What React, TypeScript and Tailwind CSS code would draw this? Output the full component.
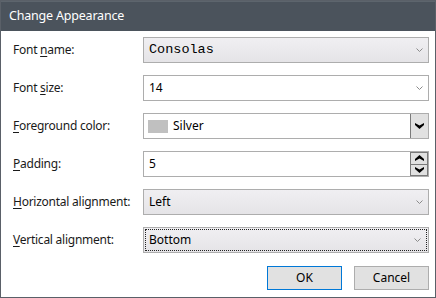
import React from 'react'

const font = { fontFamily: '"Noto Sans", "Open Sans", sans-serif' }

function Chevron() {
    return (
        <svg width="7" height="4" viewBox="0 0 7 4" className="mr-[5px]">
            <polyline points="0.5,0.5 3.5,3.5 6.5,0.5" fill="none" stroke="#8a8a8a" strokeWidth="1" />
        </svg>
    )
}

function BoldArrow({ up = false }: { up?: boolean }) {
    return (
        <svg width="9" height="6" viewBox="0 0 9 6" style={{ transform: up ? 'rotate(180deg)' : undefined }}>
            <path d="M0 0 L4.5 2.5 L9 0 L9 2 L4.5 6 L0 2 Z" fill="#000" />
        </svg>
    )
}

function Label({ text, i }: { text: string; i: number }) {
    // underline the access key character
    return (
        <div className="w-[131px] pl-[1px] text-[12px] tracking-[-0.25px] text-[#1a1a1a]">
            {text.slice(0, i)}
            <span className="underline underline-offset-2">{text[i]}</span>
            {text.slice(i + 1)}
        </div>
    )
}

function Row({ label, k, children }: { label: string; k: number; children: React.ReactNode }) {
    return (
        <div className="flex items-center h-[26px]">
            <Label text={label} i={k} />
            {children}
        </div>
    )
}

export default function App() {
    return (
        <div
            className="w-[436px] h-[298px] bg-white border border-[#5a6068] flex flex-col"
            style={font}
        >
            {/* Title bar */}
            <div className="h-[30px] bg-[#4b535c] border-t border-[#5d656d] flex items-center pl-[8px] text-[12.5px] tracking-[-0.2px] text-white">
                Change Appearance
            </div>

            <div className="flex flex-col gap-[12px] pt-[6px] pl-[11px] pr-[6px]">
                <Row label="Font name:" k={5}>
                    <div className="w-[286px] h-[26px] border border-[#adadad] bg-gradient-to-b from-[#f0eff2] to-[#e5e4e7] flex items-center justify-between pl-[5px]">
                        <span className="text-[13.5px] text-black" style={{ fontFamily: '"Liberation Mono", monospace' }}>
                            Consolas
                        </span>
                        <Chevron />
                    </div>
                </Row>

                <Row label="Font size:" k={5}>
                    <div className="w-[286px] h-[26px] border border-[#adadad] bg-white flex items-center justify-between pl-[5px] text-[12px]">
                        <span>14</span>
                        <Chevron />
                    </div>
                </Row>

                <Row label="Foreground color:" k={0}>
                    <div className="w-[286px] h-[26px] border border-[#adadad] bg-white flex items-center text-[12px]">
                        <div className="w-[20px] h-[13px] bg-[#c0c0c0] ml-[4px]" />
                        <span className="ml-[5px]">Silver</span>
                        <div className="ml-auto w-[18px] h-[24px] bg-[#e1e1e1] border-l border-[#7a7a7a] flex items-center justify-center">
                            <BoldArrow />
                        </div>
                    </div>
                </Row>

                <Row label="Padding:" k={0}>
                    <div className="w-[286px] h-[26px] border border-[#adadad] bg-white flex items-center text-[12px]">
                        <span className="pl-[5px]">5</span>
                        <div className="ml-auto w-[18px] h-[24px] flex flex-col">
                            <div className="flex-1 bg-[#e1e1e1] border border-[#7a7a7a] flex items-center justify-center">
                                <BoldArrow up />
                            </div>
                            <div className="flex-1 bg-[#e1e1e1] border border-t-0 border-[#7a7a7a] flex items-center justify-center">
                                <BoldArrow />
                            </div>
                        </div>
                    </div>
                </Row>

                <Row label="Horizontal alignment:" k={0}>
                    <div className="w-[286px] h-[26px] border border-[#adadad] bg-gradient-to-b from-[#f0eff2] to-[#e5e4e7] flex items-center justify-between pl-[5px] text-[12px]">
                        <span>Left</span>
                        <Chevron />
                    </div>
                </Row>

                <Row label="Vertical alignment:" k={0}>
                    <div className="w-[286px] h-[26px] border border-[#adadad] bg-gradient-to-b from-[#f0eff2] to-[#e5e4e7] p-[1px]">
                        <div className="h-full border border-dotted border-[#222] flex items-center justify-between pl-[3px] text-[12px]">
                            <span>Bottom</span>
                            <Chevron />
                        </div>
                    </div>
                </Row>
            </div>

            {/* Buttons */}
            <div className="flex justify-end gap-[12px] pr-[6px] mt-[13px] text-[12px]">
                <button className="w-[75px] h-[24px] bg-[#e1e1e1] border border-[#0078d7]">OK</button>
                <button className="w-[75px] h-[24px] bg-[#e1e1e1] border border-[#adadad]">Cancel</button>
            </div>
        </div>
    )
}
